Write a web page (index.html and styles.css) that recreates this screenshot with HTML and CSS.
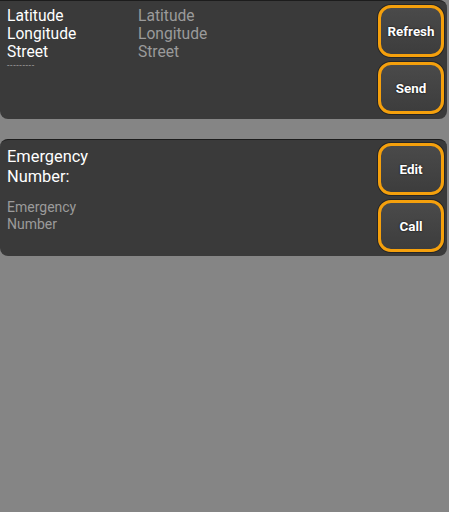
FILE: index.html
```html
<!DOCTYPE html>
<html lang="en">
<head>
	<meta charset="UTF-8">
	<title>Location</title>
	<link rel="stylesheet" href="styles.css">
</head>
<body>
	<div class="card">
		<div class="info">
			<div class="fields">
				<span class="label">Latitude</span>
				<span class="hint">Latitude</span>
				<span class="label">Longitude</span>
				<span class="hint">Longitude</span>
				<span class="label">Street</span>
				<span class="hint">Street</span>
			</div>
			<p class="dashes">---------</p>
		</div>
		<div class="buttons">
			<button class="btn">Refresh</button>
			<button class="btn">Send</button>
		</div>
	</div>

	<div class="card card-second">
		<div class="info">
			<p class="title">Emergency Number:</p>
			<p class="number">Emergency Number</p>
		</div>
		<div class="buttons">
			<button class="btn">Edit</button>
			<button class="btn">Call</button>
		</div>
	</div>
</body>
</html>
```

FILE: styles.css
```css
body, p {
	margin: 0;
	padding: 0;
}
body {
	background: #858585;
	font-family: Roboto, "Liberation Sans", sans-serif;
	width: 449px;
	height: 512px;
}

.card {
	display: flex;
	width: 447px;
	background: #3a3a3a;
	border-top: 1px solid #1c1c1c;
	border-radius: 0 8px 8px 8px;
	box-sizing: border-box;
	padding: 4px 3px 5px 7px;
}
.card-second {
	margin-top: 20px;
	border-radius: 8px;
	padding-top: 3px;
	padding-bottom: 4px;
}

.info {
	flex: 1;
}
.fields {
	display: grid;
	grid-template-columns: 131px auto;
	margin-top: 2px;
	font-size: 15.6px;
	line-height: 18px;
}
.label {
	color: #ffffff;
}
.hint {
	color: #9b9b9b;
}
.dashes {
	color: #a0a0a0;
	font-size: 9px;
	line-height: 8px;
	letter-spacing: 0.6px;
}

.title {
	width: 110px;
	margin-top: 4px;
	color: #ffffff;
	font-size: 16.4px;
	line-height: 20px;
}
.number {
	width: 100px;
	margin-top: 12px;
	color: #9b9b9b;
	font-size: 14px;
	line-height: 17px;
}

.buttons {
	display: flex;
	flex-direction: column;
	gap: 5px;
}
.btn {
	width: 66px;
	height: 52px;
	border: 3px solid #f5a00c;
	border-radius: 13px;
	background: linear-gradient(#4a4a4a, #3d3d3d);
	box-shadow: 0 0 0 1px #262626;
	color: #ffffff;
	font-family: Roboto, "Liberation Sans", sans-serif;
	font-weight: bold;
	font-size: 13.4px;
	text-shadow: 0 0 2px #000000;
	padding: 0;
}
```
